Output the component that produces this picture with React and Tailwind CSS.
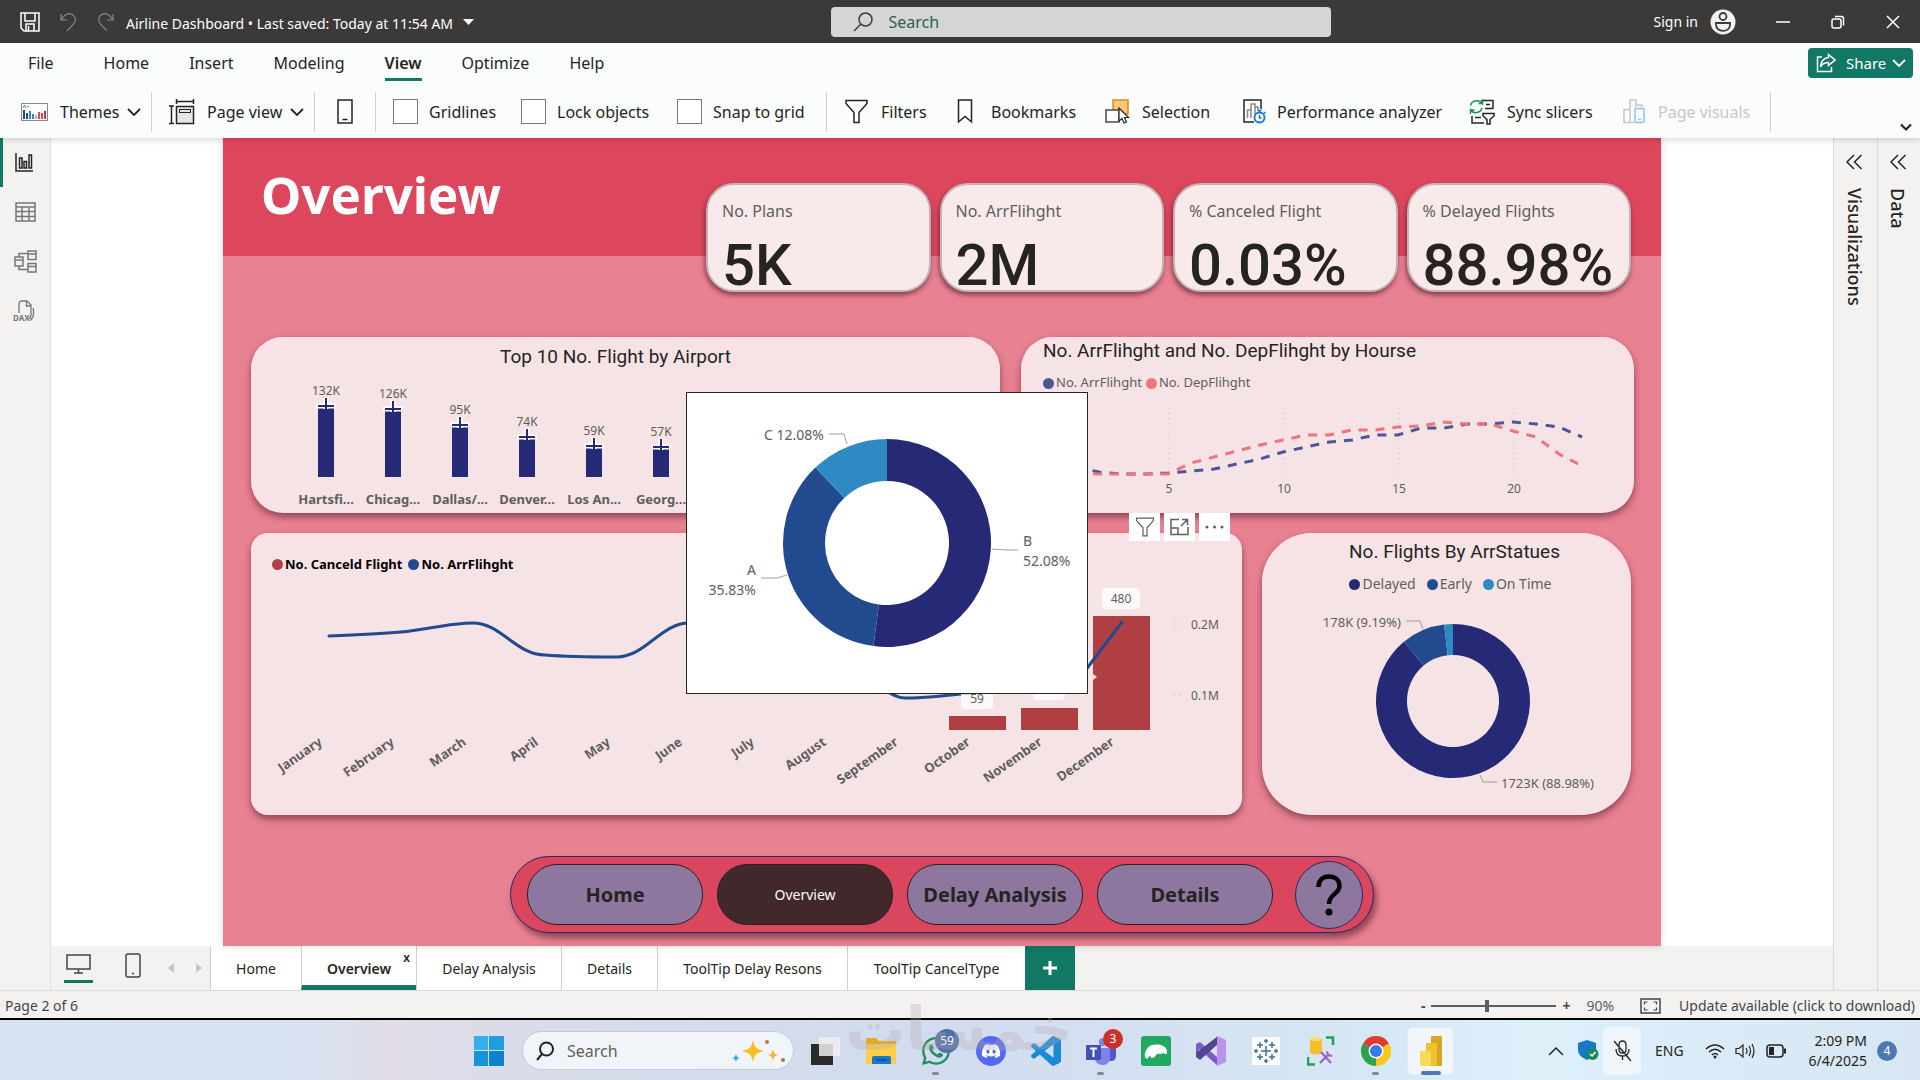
import React from "react";
import { FaDiscord, FaWhatsapp } from "react-icons/fa";

const NAVY = "#262a76";
const BLUE = "#224b8f";
const SKY = "#2f8ac4";
const RED = "#b03f43";

const polar = (cx, cy, r, share) => {
  const a = share * Math.PI * 2 - Math.PI / 2;
  return [cx + r * Math.cos(a), cy + r * Math.sin(a)];
};

function Donut({ cx, cy, outer, inner, slices }) {
  let start = 0;
  return slices.map(([share, color]) => {
    const end = start + share;
    const [x1, y1] = polar(cx, cy, outer, start);
    const [x2, y2] = polar(cx, cy, outer, end);
    const [x3, y3] = polar(cx, cy, inner, end);
    const [x4, y4] = polar(cx, cy, inner, start);
    const large = share > 0.5 ? 1 : 0;
    start = end;
    return (
      <path
        key={color}
        fill={color}
        d={`M${x1},${y1}A${outer},${outer} 0 ${large} 1 ${x2},${y2}L${x3},${y3}A${inner},${inner} 0 ${large} 0 ${x4},${y4}Z`}
      />
    );
  });
}

function Icon({ w = 24, h = 24, className = "", children, box }) {
  return (
    <svg
      aria-hidden="true"
      width={w}
      height={h}
      viewBox={box || `0 0 ${w} ${h}`}
      fill="none"
      stroke="currentColor"
      strokeWidth="1.5"
      className={`shrink-0 ${className}`}
    >
      {children}
    </svg>
  );
}

const Chevron = ({ className = "" }) => (
  <Icon w={14} h={10} className={className}>
    <path d="M1 2l6 6 6-6" strokeWidth="1.8" />
  </Icon>
);

const Funnel = ({ w = 23, h = 25 }) => (
  <Icon w={w} h={h} box="0 0 23 25">
    <path d="M1 1.500H22V4.500L14 13.500V23.500H9V13.500L1 4.500Z" />
  </Icon>
);

function TitleBar() {
  return (
    <header className="flex h-[43px] items-center bg-[#3b3a38] text-white">
      <div className="flex flex-[834] items-center pl-5">
        <button aria-label="Save">
          <Icon w={20} h={20}>
            <path d="M1 1H19V19H4L1 16ZM5 1V9H15V1M6 19V12H14V19M8.500 14V19" />
          </Icon>
        </button>
        <button aria-label="Undo" className="ml-5 text-[#8a8886]">
          <Icon w={17} h={20}>
            <path d="M1 2V8H7M1.500 7.500C5 1 11 0 14.500 4.500C18 10 11 14 7 19" strokeWidth="1.200" />
          </Icon>
        </button>
        <button aria-label="Redo" className="ml-5 text-[#8a8886]">
          <Icon w={17} h={20}>
            <path d="M16 2V8H10M15.500 7.500C12 1 6 0 2.500 4.500C-1 10 6 14 10 19" strokeWidth="1.200" />
          </Icon>
        </button>
        <button className="ml-3 flex items-center gap-2.5 pt-1 text-sm">
          Airline Dashboard • Last saved: Today at 11:54 AM
          <Icon w={11} h={6} className="mb-1">
            <path d="M0 0H11L5.500 6Z" fill="currentColor" stroke="none" />
          </Icon>
        </button>
      </div>
      <label className="flex h-[30px] w-[500px] items-center gap-4 rounded-sm bg-[#d5d5d3] pl-[22px] text-[#3b3a39]">
        <Icon w={20} h={20}>
          <circle cx="12.500" cy="7.500" r="6.500" />
          <path d="M8 12L1 19" />
        </Icon>
        <input
          aria-label="Search"
          placeholder="Search"
          className="w-full bg-transparent text-base outline-none placeholder:text-[#285f55]"
        />
      </label>
      <div className="flex flex-[586] items-center justify-end pr-5">
        <button className="flex items-center gap-3 text-sm">
          Sign in
          <Icon w={26} h={26}>
            <circle cx="13" cy="13" r="12.500" fill="#f3f2f1" stroke="none" />
            <g stroke="#3b3a39" strokeWidth="1.800">
              <circle cx="13" cy="7.500" r="3.500" />
              <path d="M6 14H20V15.500C20 24 6 24 6 15.500Z" />
            </g>
          </Icon>
        </button>
        <button aria-label="Minimize" className="ml-10">
          <Icon w={14} h={14}>
            <path d="M0 7H14" />
          </Icon>
        </button>
        <button aria-label="Restore" className="ml-[41px]">
          <Icon w={14} h={14}>
            <rect x="1" y="4" width="9" height="9" rx="2" />
            <path d="M4 1.500H10.500Q12.500 1.500 12.500 4V10.500" />
          </Icon>
        </button>
        <button aria-label="Close" className="ml-[41px]">
          <Icon w={14} h={14}>
            <path d="M1 1L13 13M13 1L1 13" />
          </Icon>
        </button>
      </div>
    </header>
  );
}

function RibbonTabs() {
  const tabs = ["Home", "Insert", "Modeling", "View", "Optimize", "Help"];
  return (
    <nav className="flex h-10 items-center pl-7 pr-[7px] text-base text-[#252423]">
      <button className="mr-[50px]">File</button>
      <div className="flex gap-10">
        {tabs.map((t) =>
          t === "View" ? (
            <button key={t} className="relative font-semibold">
              {t}
              <span className="absolute inset-x-0 -bottom-1.5 h-[3px] bg-[#117865]" />
            </button>
          ) : (
            <button key={t}>{t}</button>
          )
        )}
      </div>
      <button className="ml-auto flex h-[30px] w-[105px] items-center rounded bg-[#117865] pl-2 text-[15px] text-white">
        <Icon w={20} h={20}>
          <path d="M6 4H1.500V18.500H15.500V14M12.500 1.500L19 7L12.500 12.500V9.500C8 9.500 6 11 4.500 14C5 8 8 5 12.500 4.500Z" />
        </Icon>
        <span className="ml-2.5 mr-1.5 grow">Share</span>
        <Chevron className="mr-2.5" />
      </button>
    </nav>
  );
}

const Divider = ({ className = "" }) => <span className={`h-10 w-px bg-[#d2d0ce] ${className}`} />;

function Check({ label, className }) {
  return (
    <label className={`flex items-center gap-[11px] ${className}`}>
      <input type="checkbox" className="size-[25px] appearance-none border border-[#7a7876] bg-white" />
      {label}
    </label>
  );
}

function Toolbar() {
  return (
    <div className="flex h-[55px] items-center pt-0.5 text-base text-[#252423]">
      <button className="ml-[21px] flex w-[130px] items-center">
        <Icon w={27} h={18}>
          <rect x="0.500" y="0.500" width="26" height="17" fill="#fff" stroke="#8a8886" strokeWidth="1" />
          <g stroke="none">
            <rect x="2" y="7" width="2" height="9" fill={BLUE} />
            <rect x="5" y="10" width="2" height="6" fill={BLUE} />
            <rect x="8" y="8" width="2" height="8" fill={SKY} />
            <rect x="11" y="11" width="2" height="5" fill={SKY} />
            <rect x="14" y="12" width="2" height="4" fill="#f3a0a8" />
            <rect x="17" y="9" width="2" height="7" fill="#dd475e" />
            <rect x="20" y="10" width="2" height="6" fill="#dd475e" />
            <rect x="23" y="8" width="2" height="8" fill={RED} />
          </g>
          <path d="M2 5L3.500 2L5 5M6 3.500H8" stroke="#605e5c" strokeWidth="0.800" />
        </Icon>
        <span className="ml-3 mr-1.5 grow text-left">Themes</span>
        <Chevron className="mr-2.5" />
      </button>
      <Divider />
      <button className="ml-[17px] flex w-[145px] items-center">
        <Icon w={26} h={26}>
          <path d="M7 2.500H25M7.500 0V5M24.500 0V5M0 7H5M2.500 7V24M0 24.500H5" />
          <rect x="7.500" y="7.500" width="17" height="17" fill="#e8e6e4" />
          <rect x="10.500" y="10.500" width="11" height="3" strokeWidth="1" />
        </Icon>
        <span className="ml-3 mr-1.5 grow text-left">Page view</span>
        <Chevron className="mr-2.5" />
      </button>
      <Divider />
      <button aria-label="Mobile layout" className="ml-[22px] mr-[22px]">
        <Icon w={16} h={25}>
          <rect x="1" y="1" width="14" height="23" />
          <path d="M5.500 20.500H10.500" />
        </Icon>
      </button>
      <Divider />
      <Check label="Gridlines" className="ml-[17px] w-[128px]" />
      <Check label="Lock objects" className="w-[156px]" />
      <Check label="Snap to grid" className="w-[149px]" />
      <Divider />
      <button className="ml-[18px] flex w-[112px] items-center gap-[13px]">
        <Funnel />
        Filters
      </button>
      <button className="flex w-[148px] items-center gap-[18px]">
        <Icon w={16} h={25}>
          <path d="M1.500 1H14.500V23L8 17.500L1.500 23Z" />
        </Icon>
        Bookmarks
      </button>
      <button className="flex w-[138px] items-center gap-3">
        <Icon w={25} h={25}>
          <rect x="8" y="1" width="15" height="14" fill="#fbc977" stroke="#d98a1c" />
          <rect x="1" y="11" width="13" height="12" fill="#fff" stroke="#484644" />
          <path d="M14 9V22L17 19.500L19 24L21.500 23L19.500 18.500H23.500Z" fill="#fff" strokeWidth="1.200" />
        </Icon>
        Selection
      </button>
      <button className="flex w-[226px] items-center gap-[11px]">
        <Icon w={23} h={25}>
          <path d="M11 23H1V1H18V10" />
          <path d="M4.500 19V11H8V19M8 19V5H12V16M12 8H15V11" stroke="#8a8886" />
          <circle cx="16.500" cy="18.500" r="5" stroke="#0f79cc" strokeWidth="1.800" fill="#fff" />
          <path d="M16.500 16V19H18.500M14.500 11.500H18.500M16.500 11.500V13.500M21 13L22.500 14.500" stroke="#0f79cc" />
        </Icon>
        Performance analyzer
      </button>
      <button className="flex w-[154px] items-center gap-3">
        <Icon w={26} h={26}>
          <path d="M12 1.500H24V9M17 5.500H21M3 17V24H15M16 9.500H24.500M6 18.500H12" />
          <path d="M14 14.500H25V17L21 20.500V25H18V20.500L14 17Z" fill="#fff" />
          <path d="M1.500 6.500C3 1 10 0 13.500 4.500V0.500M13.500 4.500H9.500M13 9C11.500 14.500 4.500 15 1.500 11V15M1.500 11H5.500" stroke="#19924f" />
        </Icon>
        Sync slicers
      </button>
      <button disabled className="flex w-[147px] items-center gap-[13px] text-[#c8c6c4]">
        <Icon w={22} h={25}>
          <path d="M11 23.500H1V10.500H7V23.500M7 10V1H13V8M13 6H19V8" />
          <rect x="12" y="9.500" width="9" height="14" rx="1" stroke="#8fc3ee" />
          <path d="M15 20.500H18" stroke="#8fc3ee" />
        </Icon>
        Page visuals
      </button>
      <Divider />
      <button aria-label="Collapse ribbon" className="ml-auto mr-2 mt-8">
        <Icon w={12} h={9}>
          <path d="M1 1.500L6 6.500L11 1.500" strokeWidth="2.200" />
        </Icon>
      </button>
    </div>
  );
}

function SideBar() {
  return (
    <aside className="flex w-[51px] flex-col border-r border-[#e1dfdd] bg-[#f3f2f1] text-[#797775]">
      <button aria-label="Report view" className="flex h-[49px] items-center border-l-[3px] border-[#117865] pl-3 text-[#252423]">
        <Icon w={19} h={19}>
          <path d="M1 0V18H18M4.500 15V5H7V15ZM9 15V8.500H11.500V15ZM14 15V2H16.500V15Z" />
        </Icon>
      </button>
      <button aria-label="Table view" className="flex h-[49px] items-center pl-[15px]">
        <Icon w={21} h={20}>
          <path d="M1 1H20V19H1ZM1 5H20M1 9.500H20M1 14.500H20M7 5V19M14 5V19" />
        </Icon>
      </button>
      <button aria-label="Model view" className="flex h-[50px] items-center pl-[14px]">
        <Icon w={23} h={23}>
          <path d="M1 7H9V16H1ZM1 10H9M14 1H22V9.500H14ZM14 4H22M14 13.500H22V22H14ZM14 16.500H22M5 7V3.500H14M5 16V19.500H14" />
        </Icon>
      </button>
      <button aria-label="DAX query view" className="flex h-[50px] items-center pl-[13px]">
        <Icon w={22} h={22}>
          <path d="M6 13V4Q6 1 9 1H14L18 5V15Q18 18 15.500 19M13.500 1V6H18M20 8Q22 16 17.500 20.500" strokeWidth="1.300" />
          <text x="0" y="21" fontSize="8" fontWeight="700" fill="currentColor" stroke="none">DAX</text>
        </Icon>
      </button>
    </aside>
  );
}

function RightPane({ label, className = "" }) {
  return (
    <aside className={`flex flex-col items-center border-l border-[#dcdad8] bg-[#f3f2f1] pr-0.5 pt-4 text-[#252423] ${className}`}>
      <button aria-label={`Expand ${label}`}>
        <Icon w={17} h={16}>
          <path d="M8 1L1 8L8 15M15.500 1L8.500 8L15.500 15" />
        </Icon>
      </button>
      <h2 className="mt-[18px] text-lg font-medium leading-6 [writing-mode:vertical-rl]">{label}</h2>
    </aside>
  );
}

const Dot = ({ className }) => <span className={`mr-0.5 size-[11px] rounded-full ${className}`} />;

const cardShadow = "shadow-[0_4px_7px_rgba(90,30,45,0.6),inset_2px_4px_7px_rgba(255,225,230,0.9)]";

function Kpi({ label, value }) {
  return (
    <article className="h-[109px] rounded-[28px] border-2 border-[#c4b4b4] bg-[#f8eaea] pl-[14px] pt-[14px] text-[#252423] shadow-[-1px_3px_5px_rgba(90,30,45,0.7)]">
      <h3 className="text-base text-[#605e5c]">{label}</h3>
      <p className="mt-3 whitespace-nowrap font-['Roboto',sans-serif] text-[58px] font-medium leading-[60px]">{value}</p>
    </article>
  );
}

const airports = [
  ["Hartsfi...", "132K", 69],
  ["Chicag...", "126K", 72],
  ["Dallas/...", "95K", 88],
  ["Denver...", "74K", 100],
  ["Los An...", "59K", 109],
  ["Georg...", "57K", 110],
];

function TopAirports() {
  return (
    <section className={`flex-[749] rounded-[32px] bg-[#f6e3e5] ${cardShadow}`}>
      <h2 className="pr-5 pt-2 text-center font-['Roboto',sans-serif] text-[19px] leading-6 text-[#252423]">
        Top 10 No. Flight by Airport
      </h2>
      <svg viewBox="0 32 749 144" className="w-full" role="img" aria-label="Flights by airport">
        {airports.map(([name, value, y], i) => {
          const x = 75 + i * 67;
          return (
            <g key={name}>
              <rect x={x - 8} y={y + 2} width="16" height={138 - y} fill={NAVY} />
              <path d={`M${x},${y - 9}V${y + 3}M${x - 10},${y}H${x + 10}`} stroke="#fff" strokeWidth="5" />
              <path d={`M${x},${y - 8}V${y + 3}M${x - 8},${y}H${x + 8}`} stroke={NAVY} strokeWidth="2" />
              <text x={x} y={y - 11} textAnchor="middle" fontSize="12" fill="#605e5c">{value}</text>
              <text x={x} y="167" textAnchor="middle" fontSize="13" fontWeight="700" fill="#605e5c">{name}</text>
            </g>
          );
        })}
      </svg>
    </section>
  );
}

const arrivals = [130, 135, 137, 137, 136, 134, 132, 127, 122, 115, 110, 105, 103, 98, 98, 91, 91, 87, 87, 85, 87, 90, 100];
const departures = [136, 137, 137, 137, 137, 126, 120, 114, 108, 103, 98, 98, 93, 93, 90, 89, 85, 87, 87, 94, 100, 117, 129];
const hourLine = (ys) => ys.map((y, i) => `${32 + (i + 1) * 23},${y}`).join(" ");

function FlightsByHour() {
  return (
    <section className={`flex-[613] rounded-[32px] bg-[#f6e3e5] ${cardShadow}`}>
      <h2 className="pl-[22px] pt-0.5 font-['Roboto',sans-serif] text-[19px] leading-6 text-[#252423]">
        No. ArrFlihght and No. DepFlihght by Hourse
      </h2>
      <div className="mt-2.5 flex h-5 items-center gap-1 pl-[22px] text-[13px] text-[#605e5c]">
        <span className="flex items-center"><Dot className="bg-[#4d5695]" />No. ArrFlihght</span>
        <span className="flex items-center"><Dot className="bg-[#f0747c]" />No. DepFlihght</span>
      </div>
      <svg viewBox="0 56 613 120" className="w-full" role="img" aria-label="Flights by hour">
        {[5, 10, 15, 20].map((h) => (
          <g key={h}>
            <path d={`M${33 + h * 23},71V140`} stroke="#cfc7c8" strokeDasharray="1 4" />
            <text x={33 + h * 23} y="156" textAnchor="middle" fontSize="12" fill="#605e5c">{h}</text>
          </g>
        ))}
        <polyline points={hourLine(arrivals)} fill="none" stroke="#4d5695" strokeWidth="3" strokeDasharray="9 8" />
        <polyline points={hourLine(departures)} fill="none" stroke="#f0747c" strokeWidth="3" strokeDasharray="9 8" />
      </svg>
    </section>
  );
}

const months = ["January", "February", "March", "April", "May", "June", "July", "August", "September", "October", "November", "December"];
const canceled = [
  [727, 183, "59", 163],
  [799, 175, "94", 154],
  [871, 83, "480", 63],
];

function CanceledByMonth() {
  return (
    <section className={`relative flex-[991] rounded-[17px] bg-[#f6e3e5] ${cardShadow}`}>
      <div className="absolute -top-5 right-3 z-10 flex gap-1 text-[#605e5c]">
        <button aria-label="Filters on visual" className="grid h-7 w-[31px] place-items-center bg-white"><Funnel w={20} h={20} /></button>
        <button aria-label="Focus mode" className="grid h-7 w-[31px] place-items-center bg-white">
          <Icon w={19} h={18}>
            <path d="M9 1.500H1V16.500H18V9M1 10H8V16.500M11 8L17.500 1.500M12 1.500H17.500V7" />
          </Icon>
        </button>
        <button aria-label="More options" className="grid h-7 w-[31px] place-items-center bg-white">
          <Icon w={19} h={4}>
            <g fill="currentColor" stroke="none">
              <circle cx="2" cy="2" r="1.500" /><circle cx="9.500" cy="2" r="1.500" /><circle cx="17" cy="2" r="1.500" />
            </g>
          </Icon>
        </button>
      </div>
      <div className="mx-[14px] mt-2 flex h-[46px] items-center gap-1.5 border border-b-0 border-[#eee6e8] pl-1.5 text-[13px] font-bold text-black">
        <span className="flex items-center"><Dot className="bg-[#b03f43]" />No. Canceld Flight</span>
        <span className="flex items-center"><Dot className="bg-[#224b8f]" />No. ArrFlihght</span>
      </div>
      <svg viewBox="0 54 991 228" className="w-full" role="img" aria-label="Canceled and arrived flights by month">
        <path d="M14.500,54V274.500H977.500V54" fill="none" stroke="#eee6e8" />
        {months.map((m, i) => (
          <text
            key={m}
            transform={`translate(${72 + i * 72} 211) rotate(-35)`}
            textAnchor="end"
            fontSize="13"
            fontWeight="700"
            fill="#605e5c"
          >
            {m}
          </text>
        ))}
        {canceled.map(([x, y]) => (
          <rect key={x} x={x - 29} y={y} width="57" height={197 - y} fill={RED} />
        ))}
        <path
          d="M78,103C102,102 126,101 150,99C174,97 198,90 222,90C250,90 265,122 294,122C318,124 342,124 366,124C394,124 410,90 438,90C470,90 550,95 582,110C610,125 630,165 654,165C678,165 702,161 726,160C750,158 774,160 798,158C815,156 828,146 837,134L871,89"
          fill="none"
          stroke={BLUE}
          strokeWidth="3"
          strokeLinecap="round"
        />
        {canceled.map(([x, , label, y]) => {
          const half = label.length > 2 ? 19 : 16;
          return (
            <g key={label}>
              <rect x={x - 1 - half} y={y - 8} width={half * 2} height="21" rx="4" fill="#fff" fillOpacity="0.75" />
              <text x={x - 1} y={y + 7} textAnchor="middle" fontSize="12" fill="#605e5c">{label}</text>
            </g>
          );
        })}
        <path d="M842,141L846,144L842,147Z" fill="#f6e3e5" />
        <path d="M922,91H931M922,162H931" stroke="#cfc7c8" strokeDasharray="2 4" />
        <text x="940" y="96" fontSize="12" fill="#605e5c">0.2M</text>
        <text x="940" y="167" fontSize="12" fill="#605e5c">0.1M</text>
      </svg>
    </section>
  );
}

function ArrivalStatus() {
  return (
    <section className={`flex-[369] rounded-[50px] bg-[#f6e3e5] ${cardShadow}`}>
      <h2 className="pl-4 pt-[7px] text-center font-['Roboto',sans-serif] text-[19px] leading-6 text-[#252423]">
        No. Flights By ArrStatues
      </h2>
      <div className="mt-2.5 flex h-5 items-center justify-center gap-[11px] pl-2 text-sm text-[#605e5c]">
        <span className="flex items-center"><Dot className="bg-[#262a76]" />Delayed</span>
        <span className="flex items-center"><Dot className="bg-[#224b8f]" />Early</span>
        <span className="flex items-center"><Dot className="bg-[#2f8ac4]" />On Time</span>
      </div>
      <svg viewBox="0 61 369 221" className="w-full" role="img" aria-label="Flights by arrival status">
        <Donut cx={191} cy={168} outer={77} inner={46} slices={[[0.8898, NAVY], [0.0919, BLUE], [0.0183, SKY]]} />
        <path d="M144,88H158L161,96M218,242L221,249H235" fill="none" stroke="#a19f9d" />
        <text x="139" y="94" textAnchor="end" fontSize="13" fill="#605e5c">178K (9.19%)</text>
        <text x="239" y="255" fontSize="13" fill="#605e5c">1723K (88.98%)</text>
      </svg>
    </section>
  );
}

function DelayTooltip() {
  return (
    <div role="tooltip" className="absolute left-[463px] top-[254px] z-20 h-[302px] w-[402px] border border-[#252423] bg-white">
      <svg viewBox="0 0 400 300" className="w-full" role="img" aria-label="Share of delay types">
        <Donut cx={200} cy={150} outer={104} inner={62} slices={[[0.5208, NAVY], [0.3583, BLUE], [0.1209, SKY]]} />
        <path d="M142,41H157L160,51M305,156L320,157H331M74,185H90L100,182" fill="none" stroke="#a19f9d" />
        <g fontSize="14" fill="#605e5c">
          <text x="137" y="47" textAnchor="end">C 12.08%</text>
          <text x="336" y="153">B</text>
          <text x="336" y="173">52.08%</text>
          <text x="69" y="182" textAnchor="end">A</text>
          <text x="69" y="202" textAnchor="end">35.83%</text>
        </g>
      </svg>
    </div>
  );
}

function ReportNav() {
  const pill = "h-[61px] w-[176px] rounded-[30px] border border-[#252423] bg-[#8d779f] text-xl font-bold text-[#252423]";
  return (
    <nav className="mx-auto mt-[41px] flex h-[77px] w-[864px] items-center gap-[14px] rounded-full border border-[#262a66] bg-[#d9465e] pl-4 shadow-[3px_5px_6px_rgba(90,30,45,0.6)]">
      <button className={pill}>Home</button>
      <button className="h-[61px] w-[176px] rounded-[30px] border border-[#252423] bg-[#41282b] text-sm text-white">Overview</button>
      <button className={pill}>Delay Analysis</button>
      <button className={pill}>Details</button>
      <button aria-label="Help" className="ml-2 grid size-[68px] place-items-center rounded-full border border-[#262a66] bg-[#8d779f] text-black">
        <Icon w={26} h={42}>
          <path d="M2.500 13C2.500 6 7 2.500 13 2.500C19 2.500 23.500 6 23.500 12C23.500 20 13 20 13 30" strokeWidth="4.500" />
          <circle cx="13" cy="38" r="3.500" fill="currentColor" stroke="none" />
        </Icon>
      </button>
    </nav>
  );
}

function ReportPage() {
  return (
    <main className="flex-1 bg-white px-[172px]">
      <div className="relative h-full bg-[#e88192] bg-[linear-gradient(#dd475e_118px,transparent_118px)] pb-[13px] pt-[45px] shadow-[0_0_8px_rgba(0,0,0,0.15)]">
        <div className="flex pl-[38px] pr-[30px]">
          <h1 className="flex-1 text-[51px] font-bold leading-[22px] text-white">Overview</h1>
          <div className="grid w-[925px] grid-cols-4 gap-[9px]">
            <Kpi label="No. Plans" value="5K" />
            <Kpi label="No. ArrFlihght" value="2M" />
            <Kpi label="% Canceled Flight" value="0.03%" />
            <Kpi label="% Delayed Flights" value="88.98%" />
          </div>
        </div>
        <div className="mt-[45px] flex h-[176px] gap-[21px] pl-7 pr-[27px]">
          <TopAirports />
          <FlightsByHour />
        </div>
        <div className="mt-5 flex h-[282px] gap-5 pl-7 pr-[30px]">
          <CanceledByMonth />
          <ArrivalStatus />
        </div>
        <ReportNav />
        <DelayTooltip />
      </div>
    </main>
  );
}

function PageTabs() {
  const tab = "h-full border-l border-[#d2d0ce] bg-white pt-0.5";
  return (
    <div className="flex h-11 items-center bg-[#f3f2f1] text-sm text-[#252423]">
      <button aria-label="Desktop layout" className="ml-[13px] flex h-full w-[29px] flex-col items-center text-[#484644]">
        <Icon w={25} h={20} className="mt-2">
          <path d="M1 1H24V15H1ZM8 19H17M12.500 15V19" />
        </Icon>
        <span className="mt-1.5 h-[3px] w-full bg-[#117865]" />
      </button>
      <button aria-label="Mobile layout" className="ml-8 text-[#484644]">
        <Icon w={16} h={25} className="-mt-1.5">
          <rect x="1" y="1" width="14" height="23" rx="2" />
          <path d="M7 20.500H9" />
        </Icon>
      </button>
      <button aria-label="Previous page" className="ml-[27px]">
        <Icon w={6} h={10}><path d="M6 0V10L0 5Z" fill="#c8c6c4" stroke="none" /></Icon>
      </button>
      <button aria-label="Next page" className="ml-[22px] mr-2">
        <Icon w={6} h={10}><path d="M0 0V10L6 5Z" fill="#c8c6c4" stroke="none" /></Icon>
      </button>
      <button className={`${tab} w-[91px]`}>Home</button>
      <div className="relative h-full w-[115px]">
        <button className="h-full w-full border-b-[5px] border-l border-b-[#117865] border-l-[#d2d0ce] bg-white pt-1.5 font-semibold">Overview</button>
        <button aria-label="Delete page" className="absolute right-1.5 top-1 text-xs font-semibold leading-4">x</button>
      </div>
      <button className={`${tab} w-[145px]`}>Delay Analysis</button>
      <button className={`${tab} w-24`}>Details</button>
      <button className={`${tab} w-[190px]`}>ToolTip Delay Resons</button>
      <button className={`${tab} w-[178px]`}>ToolTip CancelType</button>
      <button aria-label="New page" className="grid h-full w-[50px] place-items-center bg-[#117865] text-white">
        <Icon w={14} h={14}><path d="M7 0V14M0 7H14" strokeWidth="3" /></Icon>
      </button>
    </div>
  );
}

function StatusBar() {
  return (
    <footer className="flex h-[30px] items-center border-b-2 border-t border-b-black border-t-[#dcdad8] bg-[#f3f2f1] px-[5px] pt-0.5 text-sm text-[#484644]">
      <span className="flex-1">Page 2 of 6</span>
      <button aria-label="Zoom out" className="font-bold">-</button>
      <input
        type="range"
        aria-label="Zoom"
        min="0"
        max="100"
        defaultValue="44"
        className="mx-1.5 h-4 w-[125px] appearance-none bg-[linear-gradient(#605e5c,#605e5c)] bg-[length:100%_2px] bg-center bg-no-repeat [&::-webkit-slider-thumb]:h-3 [&::-webkit-slider-thumb]:w-1 [&::-webkit-slider-thumb]:appearance-none [&::-webkit-slider-thumb]:bg-[#605e5c]"
      />
      <button aria-label="Zoom in" className="font-bold">+</button>
      <span className="ml-4 text-[#605e5c]">90%</span>
      <button aria-label="Fit to page" className="ml-[26px] mr-[18px]">
        <Icon w={21} h={16}>
          <rect x="1" y="1" width="19" height="14" />
          <path d="M4.500 6.500V4H7.500M13.500 4H16.500V6.500M16.500 9.500V12H13.500M7.500 12H4.500V9.500" strokeWidth="1.200" />
        </Icon>
      </button>
      <a href="#update">Update available (click to download)</a>
    </footer>
  );
}

function TaskIcon({ label, children, running, className = "" }) {
  return (
    <button aria-label={label} className={`relative grid h-[60px] w-[55px] place-items-center ${className}`}>
      {children}
      {running && <span className="absolute bottom-[6px] left-6 h-[3px] w-[7px] rounded-full bg-[#8a8886]" />}
    </button>
  );
}

function TaskBar() {
  return (
    <div className="relative flex h-[61px] items-center bg-[linear-gradient(90deg,#d6e4f2_0%,#d9e1ef_17%,#e1dce8_20%,#d5dcea_32%,#d2dcee_50%,#d6e6f4_70%,#dcf0fa_80%,#d8e6f4_100%)] text-[#252423]">
      <button aria-label="Start" className="ml-[474px]">
        <Icon w={30} h={30}>
          <g stroke="none">
            <rect width="14" height="14" fill="#35b0ec" /><rect x="15" width="15" height="14" fill="#1e9de3" />
            <rect y="15" width="14" height="15" fill="#1593dd" /><rect x="15" y="15" width="15" height="15" fill="#0d82d3" />
          </g>
        </Icon>
      </button>
      <label className="ml-[18px] flex h-[39px] w-[272px] items-center rounded-full border border-[#c3cad8] bg-[#f1f5f9] pl-3">
        <Icon w={20} h={20}>
          <circle cx="11.500" cy="8" r="6.500" strokeWidth="2" /><path d="M7 13L2 19" strokeWidth="2" />
        </Icon>
        <input aria-label="Search the taskbar" placeholder="Search" className="ml-3 w-32 bg-transparent text-base outline-none placeholder:text-[#605e5c]" />
        <Icon w={56} h={26} className="ml-auto mr-1.5">
          <g stroke="none">
            <path d="M22 2C24 10 25 11 33 13C25 15 24 16 22 24C20 16 19 15 11 13C19 11 20 10 22 2Z" fill="#f6bf26" />
            <path d="M42 11C43 15 43.500 16 47 17C43.500 18 43 19 42 23C41 19 40.500 18 37 17C40.500 16 41 15 42 11Z" fill="#f0b83a" />
            <path d="M5 16C6 19 6.500 19.500 9 20C6.500 20.500 6 21 5 24C4 21 3.500 20.500 1 20C3.500 19.500 4 19 5 16Z" fill="#35a8e8" />
            <circle cx="36" cy="4" r="2" fill="#c0744a" /><circle cx="52" cy="22" r="2" fill="#b0705a" />
          </g>
        </Icon>
      </label>
      <div className="ml-1 flex">
        <TaskIcon label="Task view">
          <Icon w={30} h={30}>
            <rect x="0" y="8" width="22" height="21" fill="#2b2b2b" stroke="none" />
            <rect x="8" y="1" width="21" height="19" fill="#efefef" fillOpacity="0.85" stroke="none" />
          </Icon>
        </TaskIcon>
        <TaskIcon label="File Explorer">
          <Icon w={30} h={28}>
            <g stroke="none">
              <path d="M0 2Q0 1 1 1H10L13 4H29Q30 4 30 5V27H0Z" fill="#e8a91b" />
              <path d="M0 7H30V26Q30 27 29 27H1Q0 27 0 26Z" fill="#fbcf4b" />
              <path d="M6 27V21Q6 19 8 19H23Q25 19 25 21V27Z" fill="#1976c9" />
              <path d="M10 23H21" stroke="#0d4f95" strokeWidth="1.500" />
            </g>
          </Icon>
        </TaskIcon>
        <TaskIcon label="WhatsApp" running>
          <FaWhatsapp size={32} color="#1f8f63" />
          <span className="absolute left-[27px] top-2 grid size-6 place-items-center rounded-full bg-[#4f6fa8] text-xs text-white">59</span>
        </TaskIcon>
        <TaskIcon label="Discord">
          <span className="grid size-[30px] place-items-center rounded-full bg-[#5468f0]"><FaDiscord size={20} color="#fff" /></span>
        </TaskIcon>
        <TaskIcon label="Visual Studio Code">
          <Icon w={30} h={30} box="0 0 24 24">
            <path
              stroke="none"
              fill="#1a8ad6"
              d="M23.150 2.587L18.210.210a1.494 1.494 0 0 0-1.705.290l-9.460 8.630-4.120-3.128a.999.999 0 0 0-1.276.057L.327 7.261A1 1 0 0 0 .326 8.740L3.899 12 .326 15.260a1 1 0 0 0 .001 1.479L1.650 17.940a.999.999 0 0 0 1.276.057l4.120-3.128 9.460 8.630a1.492 1.492 0 0 0 1.704.290l4.942-2.377A1.500 1.500 0 0 0 24 20.060V3.939a1.500 1.500 0 0 0-.850-1.352zm-5.146 14.861L10.826 12l7.178-5.448v10.896z"
            />
          </Icon>
        </TaskIcon>
        <TaskIcon label="Teams" running>
          <Icon w={30} h={28}>
            <g stroke="none">
              <circle cx="17" cy="5" r="4" fill="#7b83eb" /><circle cx="25" cy="7" r="3" fill="#5059c9" />
              <path d="M20 11H30V19Q30 24 25 24H20Z" fill="#5059c9" />
              <path d="M9 11H24V20Q24 28 16.500 28Q9 28 9 20Z" fill="#7b83eb" />
              <rect y="8" width="15" height="15" rx="1" fill="#4550b5" />
              <path d="M4 11.500H11M7.500 11.500V20" stroke="#fff" strokeWidth="2" />
            </g>
          </Icon>
          <span className="absolute left-[30px] top-2 grid size-5 place-items-center rounded-full bg-[#cf2f2a] text-xs text-white">3</span>
        </TaskIcon>
        <TaskIcon label="Creature app">
          <Icon w={30} h={30}>
            <rect width="30" height="30" rx="3" fill="#23a862" stroke="none" />
            <path d="M4 18C5 11 10 8 17 8.500C23 9 26.500 12.500 26 17C25.500 18.500 24 18 23 17.500C21.500 17 21 18 20 18C18 18 17 17 15.500 18.500C14 20 13.500 22 11 22C9.500 22 10 20 9 20C7.500 20 8 22.500 6 22.500C4 22.500 3.500 20 4 18Z" fill="#fff" stroke="none" />
          </Icon>
        </TaskIcon>
        <TaskIcon label="Visual Studio">
          <Icon w={30} h={30}>
            <g stroke="none">
              <path d="M0 8L4 6L22 22V30L3 13V18L0 21Z" fill="#7a5fc0" />
              <path d="M0 21L4 24L22 8V0L0 17Z" fill="#52458f" />
              <path d="M21 0L30 4V26L21 30Z" fill="#bd93ea" />
            </g>
          </Icon>
        </TaskIcon>
        <TaskIcon label="Tableau">
          <Icon w={28} h={28}>
            <rect width="28" height="28" fill="#fbfbfb" stroke="none" />
            <path
              d="M14 9V19M9 14H19M14 2V6M12 4H16M14 22V26M12 24H16M2 14H6M4 12V16M22 14H26M24 12V16M8 5V11M5 8H11M20 5V11M17 8H23M8 17V23M5 20H11M20 17V23M17 20H23"
              stroke="#3f7396"
            />
          </Icon>
        </TaskIcon>
        <TaskIcon label="SQL tools">
          <Icon w={28} h={30}>
            <g stroke="none">
              <path d="M3 3Q9 0 15 3V17Q9 20 3 17Z" fill="#f5bf2c" /><ellipse cx="9" cy="3" rx="6" ry="2" fill="#ffdc73" />
            </g>
            <path d="M19 1.500H26V9M8 28.500H1V21" stroke="#23a05a" strokeWidth="2.500" />
            <path d="M13 27L22 18M20 15.500L21 19L25 20M14 16L24 27" stroke="#9a62c4" strokeWidth="2.200" />
          </Icon>
        </TaskIcon>
        <TaskIcon label="Chrome" running>
          <Icon w={30} h={30}>
            <g stroke="none">
              <path d="M15 15L2 7.500A15 15 0 0 1 28 7.500Z" fill="#e03b30" />
              <path d="M15 15L28 7.500A15 15 0 0 1 15 30Z" fill="#fbc61c" />
              <path d="M15 15V30A15 15 0 0 1 2 7.500Z" fill="#2ba24c" />
              <circle cx="15" cy="15" r="7.500" fill="#fff" /><circle cx="15" cy="15" r="6" fill="#3579e8" />
            </g>
          </Icon>
        </TaskIcon>
        <TaskIcon label="Power BI">
          <span className="relative grid h-12 w-[47px] place-items-center rounded-md border border-[#e4ebf3] bg-[#f1f6fb]">
            <Icon w={22} h={30}>
              <g stroke="none">
                <rect x="11" y="0" width="11" height="30" rx="1" fill="#dba521" />
                <rect x="6" y="7" width="11" height="23" rx="1" fill="#f1c230" />
                <rect x="0" y="15" width="11" height="15" rx="1" fill="#f9d95a" />
              </g>
            </Icon>
            <span className="absolute -bottom-px left-[13px] h-[4px] w-5 rounded-full bg-[#4f77b2]" />
          </span>
        </TaskIcon>
      </div>
      <div className="ml-auto flex items-center pr-[23px] text-sm">
        <button aria-label="Show hidden icons">
          <Icon w={16} h={10}><path d="M1 9L8 2L15 9" /></Icon>
        </button>
        <Icon w={21} h={21} className="ml-[14px]">
          <path d="M9 0L18 3V10Q18 16 9 20Q0 16 0 10V3Z" fill="#1579c9" stroke="none" />
          <circle cx="14.500" cy="14" r="6" fill="#1c8a5c" stroke="none" /><path d="M12 14L14 16L17.500 12" stroke="#fff" />
        </Icon>
        <button aria-label="Microphone off" className="ml-1 grid h-12 w-[38px] place-items-center rounded-md bg-[#eef6fc]">
          <Icon w={20} h={22}>
            <path d="M7 5Q7 1 10.500 1Q14 1 14 5V10Q14 13 10.500 13Q7 13 7 10ZM4 9Q4 16 10.500 16Q17 16 17 9M10.500 16V20M2 1L19 21" strokeWidth="1.300" />
          </Icon>
        </button>
        <span className="ml-[14px] w-[50px]">ENG</span>
        <Icon w={20} h={16}>
          <path d="M1 6Q10 -2 19 6M4 9Q10 3.500 16 9M7 12Q10 9 13 12" strokeWidth="1.400" /><circle cx="10" cy="14" r="1.500" fill="currentColor" stroke="none" />
        </Icon>
        <Icon w={21} h={16} className="ml-2.5">
          <path d="M1 5.500H4L8 2V14L4 10.500H1ZM11 5Q13 8 11 11M14 3Q17 8 14 13M17 1Q21 8 17 15" strokeWidth="1.200" />
        </Icon>
        <Icon w={21} h={14} className="ml-2.5">
          <rect x="1" y="1" width="16" height="12" rx="3" /><rect x="3" y="3" width="5" height="8" fill="currentColor" stroke="none" /><path d="M19 4.500V9.500" strokeWidth="2" />
        </Icon>
        <div className="w-20 text-right leading-5">
          2:09 PM
          <br />
          6/4/2025
        </div>
        <span className="ml-2.5 grid size-5 place-items-center rounded-full bg-[#4f77b2] text-xs text-white">4</span>
      </div>
      <span className="pointer-events-none absolute -top-[26px] left-[845px] w-[228px] text-center font-['DejaVu_Sans',sans-serif] text-[60px] font-bold leading-[70px] text-[#b5a9ae]/30">
        خمسات
      </span>
    </div>
  );
}

export default function App() {
  return (
    <div className="flex min-h-screen flex-col font-['Noto_Sans','Open_Sans',sans-serif]">
      <TitleBar />
      <div className="relative z-30 bg-[#fbfcfc] shadow-[0_2px_6px_rgba(0,0,0,0.15)]">
        <RibbonTabs />
        <Toolbar />
      </div>
      <div className="flex flex-1">
        <SideBar />
        <div className="flex flex-1 flex-col">
          <ReportPage />
          <PageTabs />
        </div>
        <RightPane label="Visualizations" className="w-11" />
        <RightPane label="Data" className="w-[43px]" />
      </div>
      <StatusBar />
      <TaskBar />
    </div>
  );
}
